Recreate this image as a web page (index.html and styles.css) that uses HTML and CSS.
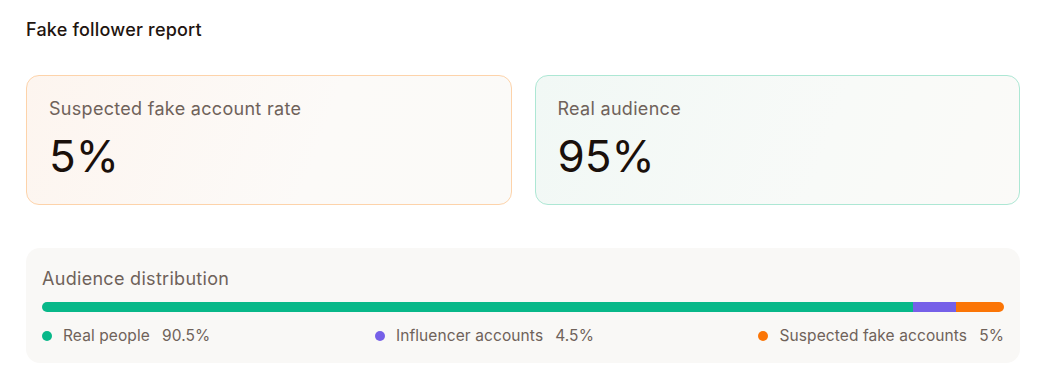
FILE: index.html
```html
<!DOCTYPE html>
<html lang="en">
<head>
    <meta charset="UTF-8">
    <title>Fake follower report</title>
    <link rel="stylesheet" href="styles.css">
</head>
<body>

<div class="report">
    <h2 class="report-title">Fake follower report</h2>

    <div class="stats">
        <div class="stat stat-fake">
            <div class="stat-label">Suspected fake account rate</div>
            <div class="stat-value">5%</div>
        </div>
        <div class="stat stat-real">
            <div class="stat-label">Real audience</div>
            <div class="stat-value">95%</div>
        </div>
    </div>

    <div class="distribution">
        <div class="distribution-title">Audience distribution</div>
        <div class="bar">
            <span class="seg seg-real" style="width: 90.5%"></span>
            <span class="seg seg-influencer" style="width: 4.5%"></span>
            <span class="seg seg-fake" style="width: 5%"></span>
        </div>
        <ul class="legend">
            <li><span class="dot dot-real"></span>Real people <span class="legend-value">90.5%</span></li>
            <li><span class="dot dot-influencer"></span>Influencer accounts <span class="legend-value">4.5%</span></li>
            <li><span class="dot dot-fake"></span>Suspected fake accounts <span class="legend-value">5%</span></li>
        </ul>
    </div>
</div>

</body>
</html>
```

FILE: styles.css
```css
body {
    margin: 0;
    font-family: Inter, "Noto Sans", sans-serif;
    color: #1f1510;
    background: #fff;
}
.report {
    padding: 18px 26px 10px;
}
.report-title {
    margin: 0 0 33px;
    font-size: 18px;
    font-weight: 500;
    line-height: 24px;
    letter-spacing: 0.2px;
    color: #1f1510;
}
.stats {
    display: grid;
    grid-template-columns: 1fr 1fr;
    gap: 23px;
}
.stat {
    border: 1px solid #fdd3aa;
    border-radius: 13px;
    padding: 21px 22px;
    background: linear-gradient(110deg, #fdf5ef 0%, #fcfaf8 60%, #fbfaf8 100%);
}
.stat-real {
    border-color: #ade7d4;
    background: linear-gradient(110deg, #f1f8f5 0%, #f8faf8 60%, #fbfaf8 100%);
}
.stat-label {
    font-size: 18px;
    line-height: 24px;
    letter-spacing: 0.3px;
    color: #6f625a;
}
.stat-value {
    margin-top: 9px;
    font-size: 44px;
    line-height: 53px;
    color: #1a100b;
}
.distribution {
    margin-top: 43px;
    background: #f9f8f6;
    border-radius: 14px;
    padding: 19px 16px 16px;
}
.distribution-title {
    font-size: 18px;
    line-height: 24px;
    letter-spacing: 0.3px;
    color: #6f625a;
}
.bar {
    display: flex;
    height: 10px;
    margin-top: 11px;
    border-radius: 5px;
    overflow: hidden;
}
.seg {
    display: block;
    height: 100%;
}
.seg-real { background: #08b889; }
.seg-influencer { background: #7660e8; }
.seg-fake { background: #fb7506; }
.legend {
    display: flex;
    justify-content: space-between;
    list-style: none;
    margin: 13px 0 0;
    padding: 0;
    font-size: 15.5px;
    line-height: 22px;
    letter-spacing: 0.1px;
    color: #6f625a;
}
.legend li {
    display: flex;
    align-items: center;
}
.legend-value {
    margin-left: 12px;
}
.dot {
    width: 10px;
    height: 10px;
    border-radius: 50%;
    margin-right: 11px;
}
.dot-real { background: #08b889; }
.dot-influencer { background: #7660e8; }
.dot-fake { background: #fb7506; }
```
